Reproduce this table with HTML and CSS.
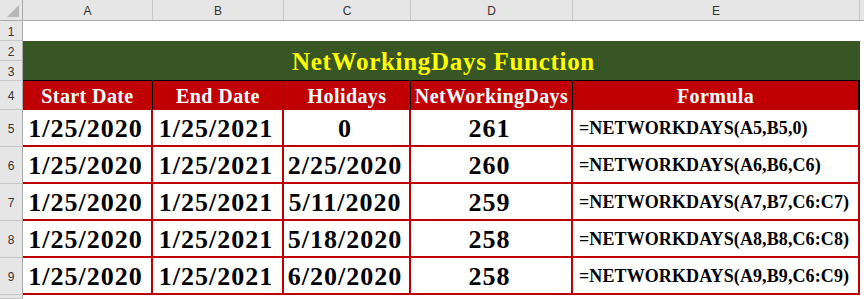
FILE: index.html
```html
<!DOCTYPE html>
<html>
<head>
<meta charset="utf-8">
<link rel="stylesheet" href="styles.css">
</head>
<body>
<div class="sheet">
  <div class="corner"><span class="tri"></span></div>
  <div class="colhead">A</div>
  <div class="colhead">B</div>
  <div class="colhead">C</div>
  <div class="colhead">D</div>
  <div class="colhead">E</div>
  <div class="colhead filler"></div>

  <div class="rowhead">1</div>
  <div class="blank span5"></div>
  <div class="blank"></div>

  <div class="rowhead">2</div>
  <div class="title">NetWorkingDays Function</div>
  <div class="blank tall"></div>
  <div class="rowhead">3</div>

  <div class="rowhead">4</div>
  <div class="hcell">Start Date</div>
  <div class="hcell">End Date</div>
  <div class="hcell">Holidays</div>
  <div class="hcell">NetWorkingDays</div>
  <div class="hcell last">Formula</div>
  <div class="blank"></div>

  <div class="rowhead">5</div>
  <div class="dcell">1/25/2020</div>
  <div class="dcell">1/25/2021</div>
  <div class="dcell">0</div>
  <div class="dcell">261</div>
  <div class="fcell">=NETWORKDAYS(A5,B5,0)</div>
  <div class="blank"></div>

  <div class="rowhead">6</div>
  <div class="dcell">1/25/2020</div>
  <div class="dcell">1/25/2021</div>
  <div class="dcell">2/25/2020</div>
  <div class="dcell">260</div>
  <div class="fcell">=NETWORKDAYS(A6,B6,C6)</div>
  <div class="blank"></div>

  <div class="rowhead">7</div>
  <div class="dcell">1/25/2020</div>
  <div class="dcell">1/25/2021</div>
  <div class="dcell">5/11/2020</div>
  <div class="dcell">259</div>
  <div class="fcell">=NETWORKDAYS(A7,B7,C6:C7)</div>
  <div class="blank"></div>

  <div class="rowhead">8</div>
  <div class="dcell">1/25/2020</div>
  <div class="dcell">1/25/2021</div>
  <div class="dcell">5/18/2020</div>
  <div class="dcell">258</div>
  <div class="fcell">=NETWORKDAYS(A8,B8,C6:C8)</div>
  <div class="blank"></div>

  <div class="rowhead">9</div>
  <div class="dcell">1/25/2020</div>
  <div class="dcell">1/25/2021</div>
  <div class="dcell">6/20/2020</div>
  <div class="dcell">258</div>
  <div class="fcell">=NETWORKDAYS(A9,B9,C6:C9)</div>
  <div class="blank"></div>

  <div class="rowhead"></div>
  <div class="blank span5"></div>
  <div class="blank"></div>
</div>
</body>
</html>
```

FILE: styles.css
```css
* { box-sizing: border-box; }
html, body { margin: 0; padding: 0; background: #ffffff; }
body { width: 864px; height: 299px; overflow: hidden; }

.sheet {
  display: grid;
  grid-template-columns: 23px 130px 131px 127px 162px 287px 4px;
  grid-template-rows: 21px 20px 20px 20px 29px 37px 37px 37px 37px 37px 4px;
  width: 864px;
  height: 299px;
  font-family: "Liberation Serif", "DejaVu Serif", serif;
}

.corner {
  background: #e6e6e6;
  border-right: 1px solid #ababab;
  border-bottom: 1px solid #ababab;
  position: relative;
}
.corner .tri {
  position: absolute;
  right: 3px;
  bottom: 3px;
  width: 0;
  height: 0;
  border-left: 12px solid transparent;
  border-bottom: 12px solid #b7b7b7;
}

.colhead {
  background: #e6e6e6;
  border-right: 1px solid #c6c6c6;
  border-bottom: 1px solid #ababab;
  display: flex;
  align-items: center;
  justify-content: center;
  font-family: "Liberation Sans", "DejaVu Sans", sans-serif;
  font-size: 12px;
  color: #333333;
  padding-top: 2px;
}
.colhead.filler { border-right: none; }

.rowhead {
  background: #e6e6e6;
  border-right: 1px solid #ababab;
  border-bottom: 1px solid #c6c6c6;
  display: flex;
  align-items: center;
  justify-content: center;
  font-family: "Liberation Sans", "DejaVu Sans", sans-serif;
  font-size: 12px;
  color: #333333;
  padding-top: 2px;
}

.blank { background: #ffffff; }
.span5 { grid-column: span 5; }
.tall { grid-row: span 2; }

.title {
  grid-column: 2 / span 5;
  grid-row: 3 / span 2;
  background: #375623;
  color: #ffff00;
  font-weight: bold;
  font-size: 25px;
  letter-spacing: 0.7px;
  display: flex;
  align-items: center;
  justify-content: center;
  padding-top: 2px;
  padding-left: 4px;
  border-bottom: 1px solid #000000;
}

.hcell {
  background: #c00000;
  color: #ffffff;
  font-weight: bold;
  font-size: 20px;
  letter-spacing: 0.4px;
  display: flex;
  align-items: center;
  justify-content: center;
  border-right: 1px solid #000000;
  padding-top: 1px;
}
.hcell.last { border-right: 2px solid #000000; }

.dcell {
  background: #ffffff;
  color: #000000;
  font-weight: bold;
  font-size: 26px;
  letter-spacing: 1px;
  display: flex;
  align-items: center;
  justify-content: center;
  border-right: 2px solid #c00000;
  border-bottom: 2px solid #c00000;
  padding-top: 2px;
  padding-right: 3px;
  white-space: nowrap;
}

.fcell {
  background: #ffffff;
  color: #000000;
  font-weight: bold;
  font-size: 18px;
  letter-spacing: 0.1px;
  display: flex;
  align-items: flex-end;
  justify-content: flex-start;
  border-right: 2px solid #c00000;
  border-bottom: 2px solid #c00000;
  padding-left: 6px;
  padding-bottom: 6px;
  white-space: nowrap;
}
```
